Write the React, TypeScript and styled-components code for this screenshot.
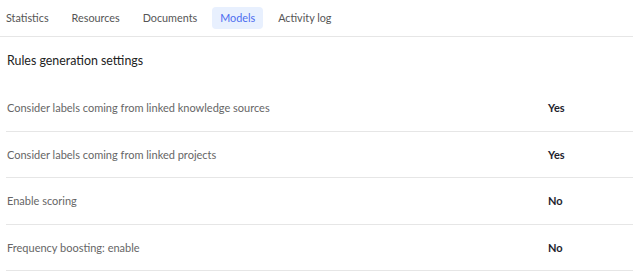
import styled, { createGlobalStyle } from 'styled-components';

const GlobalStyle = createGlobalStyle`
  body {
    margin: 0;
    background: #fff;
    font-family: Lato, "Noto Sans", sans-serif;
  }
`;

const Page = styled.div`
  width: 633px;
`;

const TabBar = styled.div`
  display: flex;
  align-items: center;
  gap: 7px;
  height: 35px;
  padding-bottom: 1px;
  margin-left: -2px;
  border-bottom: 1px solid #e6e6e6;
`;

const Tab = styled.div<{ $active?: boolean }>`
  display: flex;
  align-items: center;
  height: 22px;
  padding: 0 8px;
  border-radius: 4px;
  font-size: 10.8px;
  color: ${(p) => (p.$active ? '#4b6cf0' : '#555')};
  background: ${(p) => (p.$active ? '#e8f0fe' : 'transparent')};
`;

const Section = styled.div`
  margin-left: 6px;
`;

const Heading = styled.h3`
  margin: 0;
  padding: 15px 0 0 1px;
  height: 18px;
  line-height: 18px;
  font-size: 12.4px;
  font-weight: 400;
  color: #222;
`;

const Rows = styled.div`
  margin-top: 15px;
`;

const Row = styled.div`
  display: grid;
  grid-template-columns: 1fr 85px;
  align-items: center;
  height: 45.5px;
  border-bottom: 1px solid #e6e6e6;
`;

const Label = styled.span`
  padding-left: 1px;
  font-size: 11px;
  color: #666;
`;

const Value = styled.span`
  font-size: 11px;
  font-weight: 700;
  color: #1e1e2e;
`;

const tabs = ['Statistics', 'Resources', 'Documents', 'Models', 'Activity log'];

const settings = [
  { label: 'Consider labels coming from linked knowledge sources', value: 'Yes' },
  { label: 'Consider labels coming from linked projects', value: 'Yes' },
  { label: 'Enable scoring', value: 'No' },
  { label: 'Frequency boosting: enable', value: 'No' },
];

const App = () => (
  <Page>
    <GlobalStyle />
    <TabBar>
      {tabs.map((t) => (
        <Tab key={t} $active={t === 'Models'}>
          {t}
        </Tab>
      ))}
    </TabBar>
    <Section>
      <Heading>Rules generation settings</Heading>
      <Rows>
        {settings.map((s) => (
          <Row key={s.label}>
            <Label>{s.label}</Label>
            <Value>{s.value}</Value>
          </Row>
        ))}
      </Rows>
    </Section>
  </Page>
);

export default App;
